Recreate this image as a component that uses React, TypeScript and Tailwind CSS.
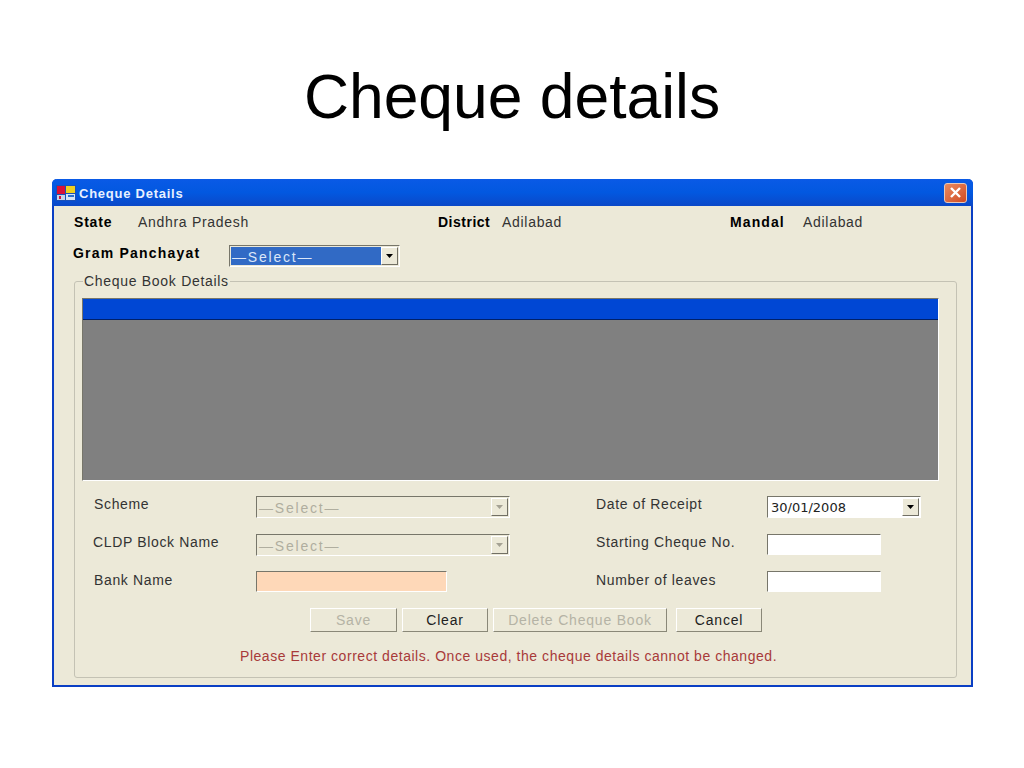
function Arrow({ disabled }: { disabled?: boolean }) {
  return (
    <div className="w-[17px] self-stretch flex items-center justify-center bg-[#ece9d8] border border-t-white border-l-white border-r-[#716f64] border-b-[#716f64]">
      <svg width="7" height="4" viewBox="0 0 7 4">
        <path d="M0 0h7L3.5 4z" fill={disabled ? "#a5a294" : "#000"} />
      </svg>
    </div>
  );
}

function Combo({ text, disabled, bg, className }: { text: string; disabled?: boolean; bg: string; className: string }) {
  return (
    <div className={`flex items-stretch h-[22px] p-px border border-t-[#77766a] border-l-[#77766a] border-r-white border-b-white ${className}`}>
      <div className={`flex-1 flex items-center pl-[1px] pt-[2px] text-[14px] tracking-[1.8px] ${bg} ${disabled ? "text-[#b0ae9f]" : "text-[#dbe6f8]"}`}>{text}</div>
      <Arrow disabled={disabled} />
    </div>
  );
}

function Input({ className }: { className: string }) {
  return <div className={`h-[21px] border border-t-[#77766a] border-l-[#77766a] border-r-white border-b-white ${className}`} />;
}

function Btn({ label, disabled, className }: { label: string; disabled?: boolean; className: string }) {
  return (
    <div
      className={`h-[24px] flex items-center justify-center text-[14px] tracking-[0.8px] border border-t-white border-l-white border-r-[#8a8878] border-b-[#8a8878] ${disabled ? "text-[#b5b3a5]" : "text-[#222]"} ${className}`}
    >
      {label}
    </div>
  );
}

export default function App() {
  return (
    <div className="w-[1024px] h-[768px] bg-white overflow-hidden font-['Liberation_Sans',sans-serif]">
      <h1 className="h-[179px] pt-[62px] text-center text-[62.4px] leading-[70px] text-black">Cheque details</h1>

      <div className="ml-[52px] w-[921px] h-[508px] bg-[#ece9d8] border-x-2 border-b-2 border-[#0a3fc4] rounded-t-[5px] flex flex-col">
        <div className="h-[27px] -mx-[2px] flex items-center pl-[4px] pr-[6px] rounded-t-[5px] bg-gradient-to-b from-[#0a5ae6] via-[#0258e0] to-[#0a48c8]">
          <svg width="20" height="16" viewBox="0 0 20 16" className="shrink-0">
            <rect width="20" height="16" fill="#1a50b8" />
            <rect x="1" y="1" width="8" height="8" fill="#d8103a" />
            <rect x="10" y="1" width="9" height="7" fill="#f0d020" />
            <rect x="10" y="9" width="9" height="6" fill="#d8e4f4" />
            <rect x="12" y="10" width="6" height="2" fill="#2a70d0" />
            <rect x="1" y="10" width="8" height="5" fill="#c8d4e8" />
            <rect x="3" y="11" width="2" height="3" fill="#d8103a" />
          </svg>
          <span className="ml-[3px] mt-[3px] text-[13px] tracking-[0.75px] font-bold text-[#e8f0ff]">Cheque Details</span>
          <div className="ml-auto w-[23px] h-[20px] rounded-[3px] border border-[#e8c8b8] bg-gradient-to-br from-[#e88a60] to-[#d04a20] flex items-center justify-center">
            <svg width="13" height="13" viewBox="0 0 13 13">
              <path d="M2 2l9 9M11 2l-9 9" stroke="#fff" strokeWidth="2.4" />
            </svg>
          </div>
        </div>

        <div className="flex items-center h-[33px] text-[14px] tracking-[0.7px] text-[#333]">
          <b className="ml-[20px] w-[64px] text-black tracking-[0.8px]">State</b>
          <span className="w-[300px]">Andhra Pradesh</span>
          <b className="w-[64px] text-black tracking-[0.5px]">District</b>
          <span className="w-[228px]">Adilabad</span>
          <b className="w-[73px] text-black tracking-[1.1px]">Mandal</b>
          <span>Adilabad</span>
        </div>

        <div className="flex items-center h-[22px] mt-[6px] ml-[19px]">
          <b className="w-[156px] -mt-[6px] text-[14px] tracking-[1.2px] text-black">Gram Panchayat</b>
          <Combo text="—Select—" bg="bg-[#316ac5]" className="w-[171px]" />
        </div>

        <fieldset className="ml-[20px] mt-[6px] w-[883px] h-[405px] border border-[#c4c2b4] rounded-[3px] px-[7px] pb-0">
          <legend className="ml-[1px] px-[1px] text-[14px] leading-[16px] tracking-[0.7px] text-[#333]">Cheque Book Details</legend>

          <div className="mt-[9px] w-[857px] h-[183px] border border-t-[#77766a] border-l-[#77766a] border-r-white border-b-white bg-[#808080]">
            <div className="h-[21px] bg-[#0047d4] border-b border-[#00206a]" />
          </div>

          <div className="mt-[15px] ml-[12px] grid grid-cols-[162px_340px_171px_auto] grid-rows-[38px_37px_32px] text-[14px] tracking-[0.65px] text-[#333]">
            <span className="-mt-[2px]">Scheme</span>
            <Combo text="—Select—" disabled bg="bg-[#ece9d8]" className="w-[254px]" />
            <span className="-mt-[2px]">Date of Receipt</span>
            <div className="flex items-stretch h-[22px] w-[154px] p-px bg-white border border-t-[#77766a] border-l-[#77766a] border-r-white border-b-white">
              <div className="flex-1 flex items-center pl-[2px] pt-[2px] text-[13px] tracking-normal font-['DejaVu_Sans',sans-serif] text-[#222]">30/01/2008</div>
              <Arrow />
            </div>

            <span className="-mt-[2px] -ml-[1px]">CLDP Block Name</span>
            <Combo text="—Select—" disabled bg="bg-[#ece9d8]" className="w-[254px]" />
            <span className="-mt-[2px]">Starting Cheque No.</span>
            <Input className="w-[114px] bg-white" />

            <span className="-mt-[1px]">Bank Name</span>
            <Input className="w-[191px] bg-[#fed8b8]" />
            <span className="-mt-[1px]">Number of leaves</span>
            <Input className="w-[114px] bg-white" />
          </div>

          <div className="mt-[5px] ml-[228px] flex">
            <Btn label="Save" disabled className="w-[87px]" />
            <Btn label="Clear" className="ml-[5px] w-[86px]" />
            <Btn label="Delete Cheque Book" disabled className="ml-[5px] w-[174px]" />
            <Btn label="Cancel" className="ml-[9px] w-[86px]" />
          </div>

          <p className="mt-[16px] ml-[158px] text-[14px] leading-[16px] tracking-[0.54px] text-[#a83a3a]">
            Please Enter correct details. Once used, the cheque details cannot be changed.
          </p>
        </fieldset>
      </div>
    </div>
  );
}
